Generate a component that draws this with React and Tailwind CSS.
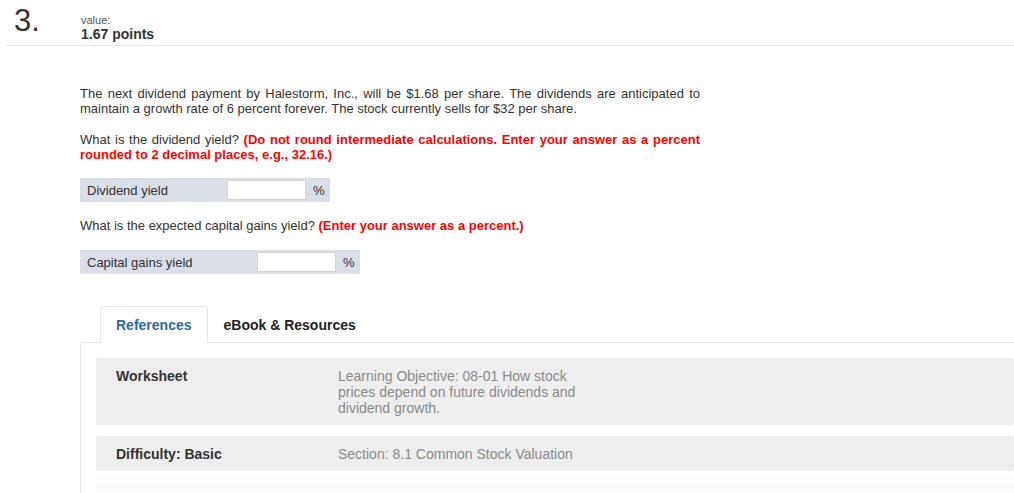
import React from "react";

const font = { fontFamily: '"Liberation Sans", Arial, sans-serif' };

const AnswerRow = ({ label, labelWidth }) => (
  <div className="flex items-center h-[24px] bg-[#dadee6] pl-[7px] pr-[5px] w-fit">
    <span className={`${labelWidth} text-[13px] text-[#333]`}>{label}</span>
    <input
      type="text"
      className="w-[79px] h-[20px] bg-white border border-[#d4d4d4] outline-none"
    />
    <span className="ml-[7px] text-[13px] text-[#333]">%</span>
  </div>
);

const InfoRow = ({ title, children, className = "" }) => (
  <div className={`flex bg-[#eeeeee] rounded-[3px] pl-[20px] text-[14px] leading-[16px] ${className}`}>
    <div className="w-[222px] font-bold text-[#333]">{title}</div>
    <div className="w-[240px] text-[#8a8a8a]">{children}</div>
  </div>
);

export default function App() {
  return (
    <div className="w-[1014px] h-[493px] overflow-hidden bg-white" style={font}>
      {/* Question header */}
      <div className="ml-[6px] flex h-[46px] border-b border-[#e6e6e6]">
        <div className="w-[75px] pl-[8px] pt-[3px] text-[31px] leading-[36px] font-light text-[#333]">
          3.
        </div>
        <div className="pt-[14px]">
          <div className="text-[11px] leading-[12px] text-[#555]">value:</div>
          <div className="text-[14px] leading-[16px] font-bold text-[#333]">1.67 points</div>
        </div>
      </div>

      {/* Question body */}
      <div className="pl-[80px] pt-[40px] text-[13px] leading-[15px] text-[#333]">
        <p className="w-[620px] text-justify">
          The next dividend payment by Halestorm, Inc., will be $1.68 per share. The dividends are
          anticipated to maintain a growth rate of 6 percent forever. The stock currently sells for
          $32 per share.
        </p>

        <p className="w-[620px] mt-[16px] text-justify">
          What is the dividend yield?{" "}
          <span className="font-bold text-[#ff0000]">
            (Do not round intermediate calculations. Enter your answer as a percent rounded to 2
            decimal places, e.g., 32.16.)
          </span>
        </p>

        <div className="mt-[16px]">
          <AnswerRow label="Dividend yield" labelWidth="w-[140px]" />
        </div>

        <p className="mt-[16px]">
          What is the expected capital gains yield?{" "}
          <span className="font-bold text-[#ff0000]">(Enter your answer as a percent.)</span>
        </p>

        <div className="mt-[17px]">
          <AnswerRow label="Capital gains yield" labelWidth="w-[170px]" />
        </div>
      </div>

      {/* References tabs */}
      <div className="ml-[80px] mt-[32px]">
        <div className="flex items-end pl-[20px]">
          <div className="h-[37px] px-[15px] flex items-center bg-white border border-b-0 border-[#e5e5e5] rounded-t-[4px] -mb-px relative text-[14px] font-bold text-[#2c6aa4]">
            References
          </div>
          <div className="h-[36px] pt-[2px] pl-[16px] flex items-center text-[14px] font-bold text-[#222]">
            eBook &amp; Resources
          </div>
        </div>
        <div className="border-t border-l border-[#e8e8e8] rounded-tl-[4px] pl-[15px] pt-[15px]">
          <InfoRow title="Worksheet" className="py-[10px] h-[67px]">
            Learning Objective: 08-01 How stock prices depend on future dividends and dividend
            growth.
          </InfoRow>
          <InfoRow title="Difficulty: Basic" className="mt-[11px] py-[10px] h-[35px]">
            Section: 8.1 Common Stock Valuation
          </InfoRow>
          <div className="h-[30px] bg-gradient-to-b from-white to-[#f9f9f9]" />
        </div>
      </div>
    </div>
  );
}
